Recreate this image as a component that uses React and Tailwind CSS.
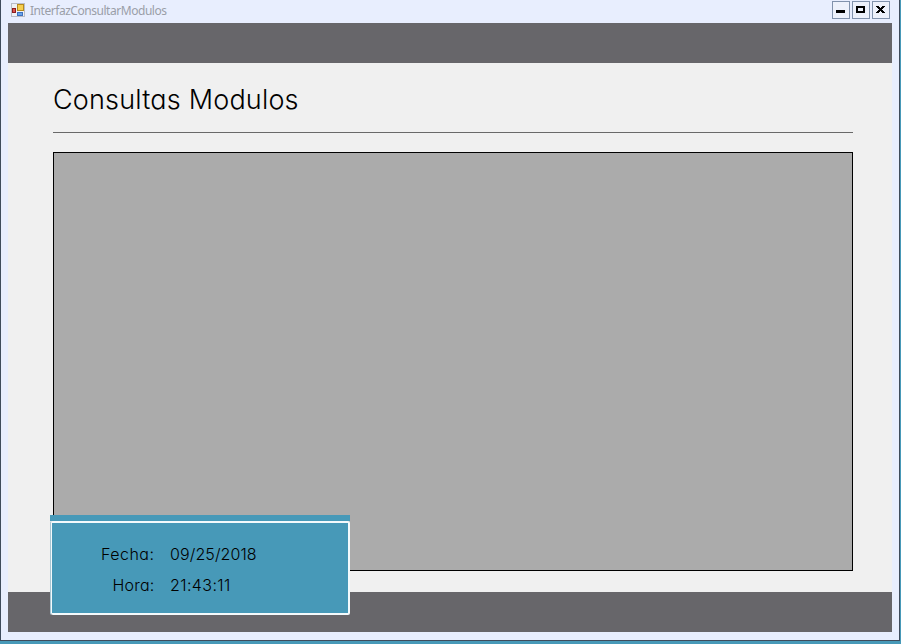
function AppIcon() {
  return (
    <svg className="h-[14px] w-[14px]" viewBox="0 0 14 14" shapeRendering="crispEdges">
      <rect x="0.5" y="0.5" width="13" height="13" fill="#eef0f4" stroke="#b9bcc6" />
      <rect x="6" y="1" width="7" height="7" fill="#b58a1e" />
      <rect x="7" y="2" width="5" height="5" fill="#f6cf50" />
      <rect x="1" y="5" width="4" height="5" fill="#8e1c1e" />
      <rect x="2" y="6" width="2" height="3" fill="#dc5550" />
      <rect x="6" y="9" width="6" height="4" fill="#3d70c0" />
      <rect x="7" y="10" width="4" height="2" fill="#69a4ea" />
    </svg>
  );
}

function CaptionButton({ label, children }) {
  return (
    <button
      aria-label={label}
      className="flex h-[18px] w-[18px] items-center justify-center border border-[#8192ac] bg-[#edf1fb]"
    >
      <svg className="h-4 w-4 shrink-0" viewBox="0 0 16 16" shapeRendering="crispEdges">
        {children}
      </svg>
    </button>
  );
}

function TitleBar() {
  return (
    <header className="flex h-[23px] shrink-0 items-start pl-[10px] pr-[9px]">
      <div className="mt-[3px]">
        <AppIcon />
      </div>
      <span className="ml-[5px] mt-[3px] font-['Noto_Sans',sans-serif] text-[12px] leading-4 tracking-[-0.46px] text-[#9a9ea8]">
        InterfazConsultarModulos
      </span>
      <div className="ml-auto mt-px flex gap-[2px]">
        <CaptionButton label="Minimizar">
          <rect x="3" y="8" width="9" height="3" fill="#000" />
        </CaptionButton>
        <CaptionButton label="Maximizar">
          <path d="M3 4h9v7H3zM5 6v3h5V6z" fill="#000" fillRule="evenodd" />
        </CaptionButton>
        <CaptionButton label="Cerrar">
          <path
            d="M3 4h3v1h1v1h1V5h1V4h3v1h-1v1h-1v1H9v1h1v1h1v1h1v1H9v-1H8V9H7v1H6v1H3v-1h1V9h1V8h1V7H5V6H4V5H3z"
            fill="#000"
          />
        </CaptionButton>
      </div>
    </header>
  );
}

function ClockPanel() {
  return (
    <aside className="absolute left-[42px] top-[492px] h-[100px] w-[300px]">
      <div className="h-[6px] bg-[#4799b8]" />
      <div className="h-[94px] rounded-[2px] border-l border-[#a9c6d2]">
        <div className="h-[94px] rounded-[2px] border-2 border-l-1 border-[#f4fafc] bg-[#4799b8] pt-[15px] font-['Inter',sans-serif] text-[16px] font-light text-black [font-feature-settings:'cv11']">
          <div className="flex h-[31px] items-center">
            <span className="w-[102.5px] text-right tracking-[0.5px]">Fecha:</span>
            <span className="ml-[15.5px] tracking-[0.1px]">09/25/2018</span>
          </div>
          <div className="flex h-[31px] items-center">
            <span className="w-[102.5px] text-right tracking-[0.2px]">Hora:</span>
            <span className="ml-[15.5px] tracking-[0.4px]">21:43:11</span>
          </div>
        </div>
      </div>
    </aside>
  );
}

export default function App() {
  return (
    <div className="h-[644px] w-[901px] overflow-hidden bg-[#4799b8] pr-px">
      <div className="flex h-[641px] w-[900px] flex-col border-x border-b border-[#3f4c5c] bg-[#e8eefe]">
        <TitleBar />
        <main className="relative mx-[7px] flex h-[609px] w-[884px] flex-col bg-[#f0f0f0]">
          <div className="h-10 shrink-0 bg-[#67666a]" />
          <section className="flex-1 pl-[45px] pr-[39px]">
            <h1 className="h-[69px] pt-[19px] font-['Inter',sans-serif] text-[27px] font-light leading-9 tracking-[0.19px] text-black [font-feature-settings:'cv11']">
              Consultas Modulos
            </h1>
            <hr className="border-t border-[#696969]" />
            <div className="mt-[19px] h-[419px] border border-black bg-[#ababab]" />
          </section>
          <div className="h-10 shrink-0 bg-[#67666a]" />
          <ClockPanel />
        </main>
      </div>
    </div>
  );
}
